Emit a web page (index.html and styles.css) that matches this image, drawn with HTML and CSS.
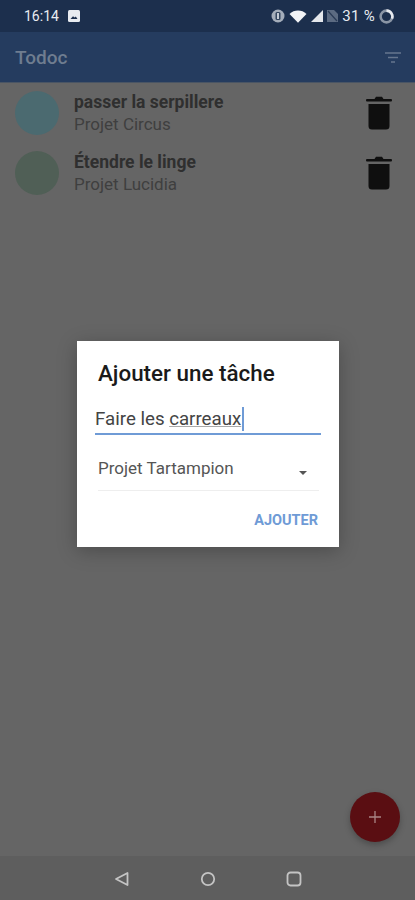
FILE: index.html
```html
<!DOCTYPE html>
<html lang="fr">
<head>
  <meta charset="UTF-8" />
  <meta name="viewport" content="width=device-width, initial-scale=1.0"/>
  <title>Todoc</title>
  <link rel="stylesheet" href="styles.css">
</head>
<body>
  <div class="screen">

    <!-- STATUS BAR -->
    <div class="status-bar">
      <div class="status-left">
        <span class="clock">16:14</span>
        <svg class="icon-image" width="12" height="12" viewBox="0 0 12 12"><rect width="12" height="12" rx="1.5" fill="#e8ebf0"/><path d="M2.5 9 L5 6.2 L6.6 7.6 L7.8 6.6 L9.5 9 Z" fill="#1c2f4d"/></svg>
      </div>
      <div class="status-right">
        <svg width="14" height="14" viewBox="0 0 14 14"><circle cx="7" cy="7" r="6.5" fill="#a4adba"/><rect x="4.500" y="3" width="5" height="8" rx="1.500" fill="#34465f"/><rect x="6" y="4" width="2" height="6" fill="#c5ccd6"/></svg>
        <svg width="18" height="13" viewBox="0 0 18 13" class="wifi"><path d="M0.5 4 C5 -0.6 13 -0.6 17.5 4 L9 12.8 Z" fill="#f2f4f7"/></svg>
        <svg width="12" height="12" viewBox="0 0 12 12"><path d="M12 0 V12 H0 Z" fill="#e4e7ec"/></svg>
        <svg width="11" height="12" viewBox="0 0 11 12" class="no-sim"><path d="M0 0 H7 L11 4 V12 H0 Z" fill="#5c6b82"/><path d="M1 1 L10 11" stroke="#2a3b56" stroke-width="1.2"/></svg>
        <span class="battery-text">31 %</span>
        <svg width="15" height="15" viewBox="0 0 14 14"><circle cx="7" cy="7" r="5.5" fill="none" stroke="#8a95a5" stroke-width="2.400"/><path d="M7 1.5 A5.5 5.5 0 0 1 12.1 9" fill="none" stroke="#e6e9ee" stroke-width="2.400"/></svg>
      </div>
    </div>

    <!-- APP BAR -->
    <div class="app-bar">
      <span class="app-title">Todoc</span>
      <svg width="16" height="11" viewBox="0 0 16 11"><path d="M0 1 H16 M3 5.500 H13 M6 10 H10" stroke="#66768e" stroke-width="1.500"/></svg>
    </div>

    <!-- TASKS -->
    <div class="task-list">
      <div class="task">
        <div class="task-dot dot-circus"></div>
        <div class="task-text">
          <div class="task-name">passer la serpillere</div>
          <div class="task-project">Projet Circus</div>
        </div>
        <svg class="trash" width="26" height="34" viewBox="0 0 26 34"><path d="M8.5 3 L10 0.8 H16 L17.5 3 H25 Q26 3 26 4.200 Q26 5.500 25 5.500 H1 Q0 5.500 0 4.200 Q0 3 1 3 Z M2.500 8 H23.500 V30 Q23.500 33.500 20 33.500 H6 Q2.500 33.500 2.500 30 Z" fill="#0f0f0f"/></svg>
      </div>
      <div class="task">
        <div class="task-dot dot-lucidia"></div>
        <div class="task-text">
          <div class="task-name">Étendre le linge</div>
          <div class="task-project">Projet Lucidia</div>
        </div>
        <svg class="trash" width="26" height="34" viewBox="0 0 26 34"><path d="M8.5 3 L10 0.8 H16 L17.5 3 H25 Q26 3 26 4.200 Q26 5.500 25 5.500 H1 Q0 5.500 0 4.200 Q0 3 1 3 Z M2.500 8 H23.500 V30 Q23.500 33.500 20 33.500 H6 Q2.500 33.500 2.500 30 Z" fill="#0f0f0f"/></svg>
      </div>
    </div>

    <!-- NAV BAR -->
    <div class="nav-bar">
      <svg width="16" height="16" viewBox="0 0 16 16"><path d="M2 8 L13.500 2 V14 Z" fill="none" stroke="#c4c4c4" stroke-width="1.800" stroke-linejoin="round"/></svg>
      <svg width="16" height="16" viewBox="0 0 16 16"><circle cx="8" cy="8" r="6.200" fill="none" stroke="#c4c4c4" stroke-width="1.800"/></svg>
      <svg width="16" height="16" viewBox="0 0 16 16"><rect x="1.500" y="1.500" width="13" height="13" rx="3" fill="none" stroke="#c4c4c4" stroke-width="1.800"/></svg>
    </div>

    <!-- FAB -->
    <div class="fab">
      <svg width="14" height="14" viewBox="0 0 14 14"><path d="M7 1 V13 M1 7 H13" stroke="#a98585" stroke-width="1.300"/></svg>
    </div>

    <!-- DIALOG -->
    <div class="dialog">
      <h2 class="dialog-title">Ajouter une tâche</h2>
      <div class="field">
        <span class="field-text">Faire les <span class="typed">carreaux</span></span><span class="caret"></span>
      </div>
      <div class="select">
        <span>Projet Tartampion</span>
        <span class="select-arrow"></span>
      </div>
      <div class="dialog-actions">
        <span class="dialog-button">AJOUTER</span>
      </div>
    </div>

  </div>
</body>
</html>
```

FILE: styles.css
```css
* {
  box-sizing: border-box;
}

body {
  margin: 0;
  font-family: 'Roboto', sans-serif;
  background: #666;
}

.screen {
  position: relative;
  display: flex;
  flex-direction: column;
  width: 415px;
  height: 900px;
  overflow: hidden;
  background: #656565;
}

.status-bar {
  display: flex;
  justify-content: space-between;
  align-items: center;
  height: 32px;
  padding: 0 21px 0 24px;
  background: #1c2f4d;
  color: #e8ebf0;
  font-size: 14px;
}

.status-left,
.status-right {
  display: flex;
  align-items: center;
}

.status-left {
  gap: 9px;
}

.status-right {
  gap: 4px;
}

.battery-text {
  letter-spacing: 0.3px;
  font-size: 15px;
}

.app-bar {
  display: flex;
  justify-content: space-between;
  align-items: center;
  height: 51px;
  padding: 0 14px 0 15px;
  background: #253c5f;
  border-bottom: 1px solid #4a5564;
}

.app-title {
  font-size: 19px;
  font-weight: 500;
  color: #6f7d90;
}

.task-list {
  flex: 1;
}

.task {
  display: flex;
  align-items: center;
  height: 60px;
  padding: 0 23px 0 15px;
}

.task-dot {
  width: 44px;
  height: 44px;
  border-radius: 50%;
}

.dot-circus {
  background: #4b6a70;
}

.dot-lucidia {
  background: #505f56;
}

.task-text {
  flex: 1;
  margin-left: 15px;
}

.task-name {
  font-size: 17.5px;
  font-weight: 700;
  line-height: 22px;
  color: #2f2f2f;
}

.task-project {
  font-size: 17px;
  line-height: 23px;
  color: #3f3f3f;
}

.nav-bar {
  display: flex;
  justify-content: center;
  gap: 70px;
  align-items: center;
  height: 44px;
  padding-top: 2px;
  background: #5e5e5e;
}

.fab {
  position: absolute;
  right: 15px;
  bottom: 58px;
  display: flex;
  justify-content: center;
  align-items: center;
  width: 50px;
  height: 50px;
  border-radius: 50%;
  background: #5a0e12;
  box-shadow: 0 3px 6px rgba(0, 0, 0, 0.25);
}

.dialog {
  position: absolute;
  left: 77px;
  top: 341px;
  width: 262px;
  height: 206px;
  padding: 19px 18px 0 18px;
  background: #fff;
  box-shadow: 0 4px 18px rgba(0, 0, 0, 0.25);
}

.dialog-title {
  margin: 0 0 0 3px;
  font-size: 22.4px;
  font-weight: 500;
  line-height: 26px;
  color: #1a1a1a;
}

.field {
  display: flex;
  align-items: center;
  height: 30px;
  margin-top: 19px;
  border-bottom: 2px solid #6f9bd6;
  font-size: 18.7px;
  color: #444;
}

.typed {
  text-decoration: underline;
  text-decoration-color: #aaa;
}

.caret {
  width: 2px;
  height: 24px;
  margin-left: 1px;
  background: #6f9bd6;
}

.select {
  display: flex;
  justify-content: space-between;
  align-items: center;
  height: 43px;
  margin: 13px 2px 0 3px;
  padding: 0 12px 2px 0;
  border-bottom: 1px solid #eee;
  font-size: 17px;
  color: #555;
}

.select-arrow {
  width: 0;
  height: 0;
  margin-top: 9px;
  border-left: 4px solid transparent;
  border-right: 4px solid transparent;
  border-top: 4px solid #555;
}

.dialog-actions {
  display: flex;
  justify-content: flex-end;
  margin: 21px 3px 0 0;
}

.dialog-button {
  font-size: 14.5px;
  font-weight: 700;
  color: #6f9bd6;
}
```
